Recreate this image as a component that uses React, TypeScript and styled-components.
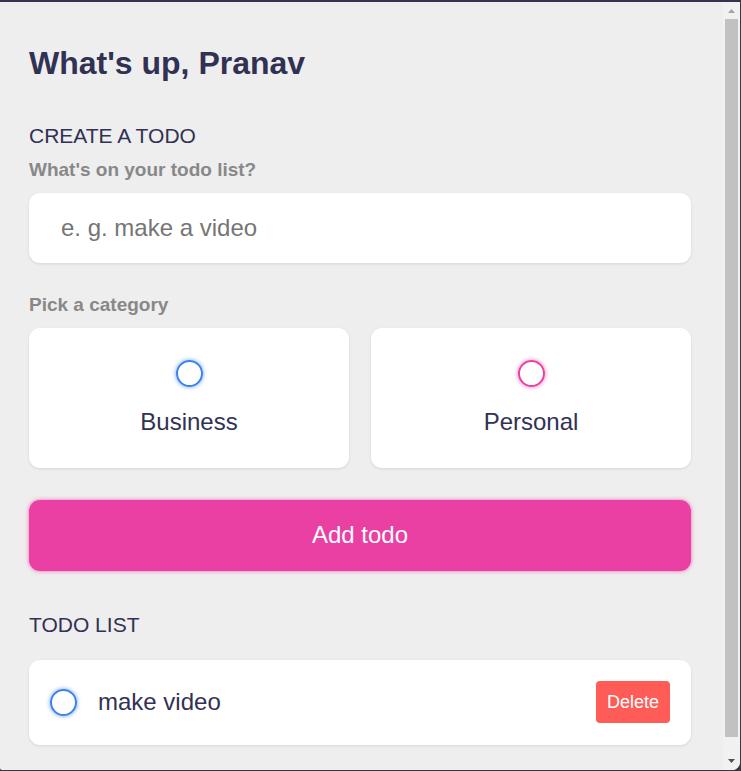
import React, { useState } from "react";
import styled, { createGlobalStyle } from "styled-components";

const theme = {
  light: "#eeeeee",
  dark: "#313154",
  grey: "#888888",
  primary: "#ea40a4",
  business: "#3a82ee",
  danger: "#ff5b57",
  shadow: "0 1px 3px rgba(0, 0, 0, 0.1)",
  primaryGlow: "0 0 4px rgba(234, 64, 164, 0.75)",
  businessGlow: "0 0 4px rgba(58, 130, 238, 0.75)",
};

type Category = "business" | "personal";

const GlobalStyle = createGlobalStyle`
  *, *::before, *::after { box-sizing: border-box; margin: 0; }
  body {
    background: #38383f;
    color: ${theme.dark};
    font-family: "Liberation Sans", Arial, sans-serif;
  }
  button, input { font: inherit; }
`;

const Frame = styled.div`
  display: flex;
  min-height: 100vh;
  border: solid #38383f;
  border-top-color: #34344a;
  border-width: 2px 1px 1px 0;
  background: #38383f;
`;

const Viewport = styled.div`
  display: flex;
  flex: 1;
  min-width: 0;
  border-radius: 0 0 8px 2px;
  background: ${theme.light};
  overflow: hidden;
`;

const Main = styled.main`
  flex: 1;
  min-width: 0;
  padding: 43px 32px 24px 29px;
`;

const Title = styled.h1`
  font-size: 32px;
  line-height: 36px;
  font-weight: 700;
  margin-bottom: 43px;
`;

const Heading = styled.h2`
  font-size: 21px;
  line-height: 24px;
  font-weight: 400;
  text-transform: uppercase;
`;

const Form = styled.form`
  display: flex;
  flex-direction: column;
  padding-top: 11px;
  margin-bottom: 42px;
`;

const FieldLabel = styled.label`
  display: block;
  color: ${theme.grey};
  font-size: 19px;
  line-height: 22px;
  font-weight: 700;
  margin-bottom: 12px;
`;

const TextInput = styled.input`
  width: 100%;
  height: 70px;
  padding: 0 32px;
  border: none;
  border-radius: 11px;
  background: #fff;
  box-shadow: ${theme.shadow};
  color: ${theme.dark};
  font-size: 24px;
  margin-bottom: 31px;
  &::placeholder { color: #757575; opacity: 1; }
`;

const Options = styled.div`
  display: grid;
  grid-template-columns: 1fr 1fr;
  gap: 22px;
  margin-bottom: 32px;
`;

const Option = styled.label`
  display: flex;
  flex-direction: column;
  align-items: center;
  gap: 21px;
  height: 140px;
  padding-top: 32px;
  border-radius: 11px;
  background: #fff;
  box-shadow: ${theme.shadow};
  font-size: 24px;
  line-height: 28px;
  cursor: pointer;
`;

const Bubble = styled.input<{ $category: Category }>`
  appearance: none;
  display: grid;
  place-items: center;
  flex: none;
  width: 27px;
  height: 27px;
  border: 2px solid ${(p) => (p.$category === "business" ? theme.business : theme.primary)};
  border-radius: 50%;
  box-shadow: ${(p) => (p.$category === "business" ? theme.businessGlow : theme.primaryGlow)};
  cursor: pointer;
  &:checked::after {
    content: "";
    width: 13px;
    height: 13px;
    border-radius: 50%;
    background: ${(p) => (p.$category === "business" ? theme.business : theme.primary)};
  }
`;

const SubmitButton = styled.button`
  width: 100%;
  height: 71px;
  padding: 0 16px 2px;
  border: none;
  border-radius: 11px;
  background: ${theme.primary};
  box-shadow: ${theme.primaryGlow};
  color: #fff;
  font-size: 24px;
  cursor: pointer;
`;

const List = styled.ul`
  list-style: none;
  padding: 0;
  margin-top: 23px;
  display: grid;
  gap: 16px;
`;

const TodoItem = styled.li`
  display: flex;
  align-items: center;
  height: 85px;
  padding: 0 21px 1px;
  border-radius: 11px;
  background: #fff;
  box-shadow: ${theme.shadow};
`;

const TodoLabel = styled.label`
  display: flex;
  align-items: center;
  gap: 21px;
  flex: 1;
  min-width: 0;
  font-size: 24px;
  line-height: 28px;
`;

const DeleteButton = styled.button`
  height: 42px;
  padding: 0 11px;
  border: none;
  border-radius: 4px;
  background: ${theme.danger};
  color: #fff;
  font-size: 18px;
  cursor: pointer;
`;

const ScrollTrack = styled.div`
  display: flex;
  flex-direction: column;
  align-items: center;
  width: 17px;
  background: #f1f1f1;
`;

const ScrollArrow = styled.svg`
  flex: none;
  display: block;
  width: 17px;
  height: 17px;
`;

const ScrollThumb = styled.div`
  width: 13px;
  flex: 1;
  margin-bottom: 16px;
  background: #c1c1c1;
`;

export default function App() {
  const [content, setContent] = useState("");
  const [category, setCategory] = useState<Category | null>(null);
  const [todos, setTodos] = useState<{ id: number; text: string; category: Category; done: boolean }[]>([
    { id: 1, text: "make video", category: "business", done: false },
  ]);

  const addTodo = (e: React.FormEvent) => {
    e.preventDefault();
    if (!content.trim() || !category) return;
    setTodos([{ id: Date.now(), text: content, category, done: false }, ...todos]);
    setContent("");
    setCategory(null);
  };

  const toggle = (id: number) => setTodos(todos.map((t) => (t.id === id ? { ...t, done: !t.done } : t)));

  return (
    <>
      <GlobalStyle />
      <Frame>
        <Viewport>
          <Main>
            <Title>What's up, Pranav</Title>
            <Heading>Create a todo</Heading>
            <Form onSubmit={addTodo}>
              <FieldLabel htmlFor="content">What's on your todo list?</FieldLabel>
              <TextInput
                id="content"
                type="text"
                placeholder="e. g. make a video"
                value={content}
                onChange={(e) => setContent(e.target.value)}
              />
              <FieldLabel as="div" id="category-label">Pick a category</FieldLabel>
              <Options role="radiogroup" aria-labelledby="category-label">
                {(["business", "personal"] as Category[]).map((c) => (
                  <Option key={c}>
                    <Bubble
                      type="radio"
                      name="category"
                      value={c}
                      $category={c}
                      checked={category === c}
                      onChange={() => setCategory(c)}
                    />
                    <span>{c === "business" ? "Business" : "Personal"}</span>
                  </Option>
                ))}
              </Options>
              <SubmitButton type="submit">Add todo</SubmitButton>
            </Form>
            <Heading>Todo list</Heading>
            <List>
              {todos.map((t) => (
                <TodoItem key={t.id}>
                  <TodoLabel>
                    <Bubble type="checkbox" $category={t.category} checked={t.done} onChange={() => toggle(t.id)} />
                    <span>{t.text}</span>
                  </TodoLabel>
                  <DeleteButton type="button" onClick={() => setTodos(todos.filter((x) => x.id !== t.id))}>
                    Delete
                  </DeleteButton>
                </TodoItem>
              ))}
            </List>
          </Main>
          <ScrollTrack aria-hidden="true">
            <ScrollArrow viewBox="0 0 17 17">
              <path d="M5 11 L8.5 7 L12 11 Z" fill="#a3a3a3" />
            </ScrollArrow>
            <ScrollThumb />
            <ScrollArrow viewBox="0 0 17 17">
              <path d="M5 6 L8.5 10 L12 6 Z" fill="#505050" />
            </ScrollArrow>
          </ScrollTrack>
        </Viewport>
      </Frame>
    </>
  );
}
